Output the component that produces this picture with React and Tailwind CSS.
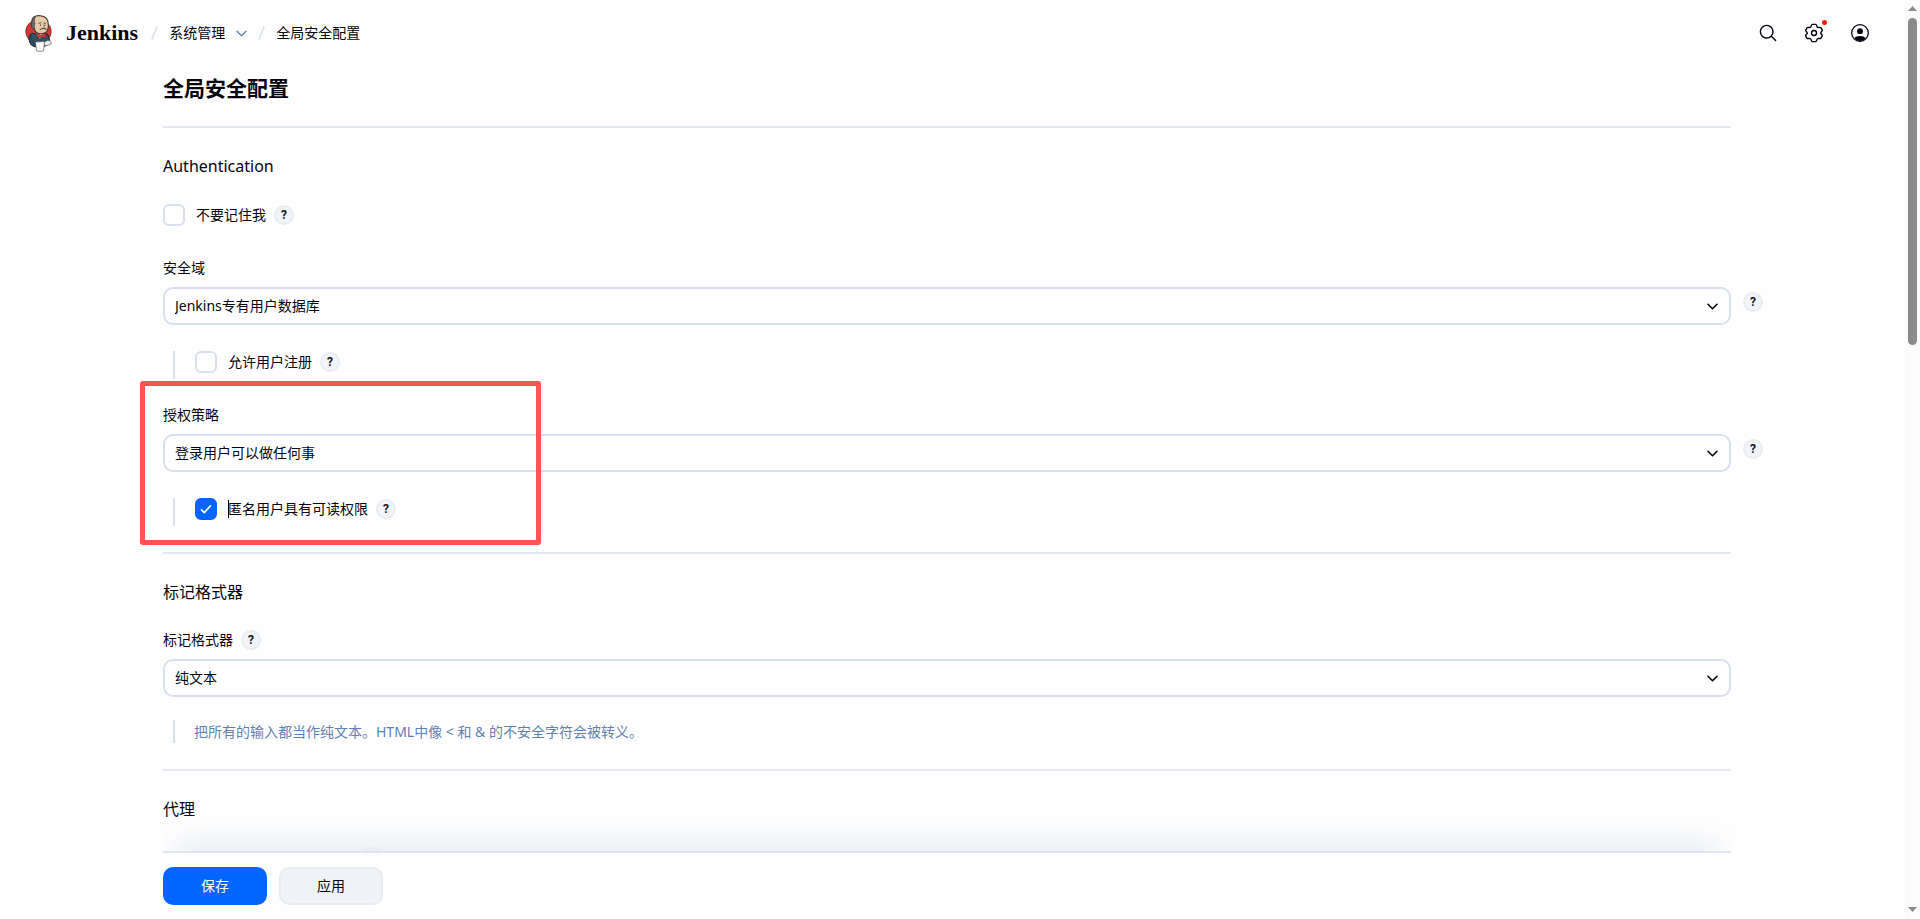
import React, { useState } from "react";

const JenkinsLogo = () => (
  <svg viewBox="77 44 80 110" className="h-[37px] w-[27px]" aria-hidden="true">
    <ellipse cx="117" cy="93" rx="38" ry="35" fill="#d33833" stroke="#5a2422" strokeWidth="2" />
    <path
      d="M98 98 C89 102 87 114 90 122 C93 134 104 140 116 139 C132 140 146 134 150 124 C150 112 148 104 140 99 L124 103 Z"
      fill="#335061"
      stroke="#1c2b36"
      strokeWidth="3"
    />
    <path d="M110 99 L120 114 L134 101 Z" fill="#f4f4f4" />
    <path
      d="M97 64 C98 51 108 45 122 46 C138 47 146 58 146 72 C147 86 141 97 130 99 C118 101 109 97 105 87 C97 84 95 76 97 64 Z"
      fill="#e6cbab"
      stroke="#39352f"
      strokeWidth="3"
    />
    <path
      d="M97 66 C99 54 104 50 108 49 C104 57 104 64 107 70 C104 74 105 80 106 86 C97 84 95 76 97 66 Z"
      fill="#6d6b6d"
      stroke="#39352f"
      strokeWidth="1.5"
    />
    <path d="M117 69 l8 -2 M132 68 l7 1" stroke="#39352f" strokeWidth="2.4" />
    <circle cx="123" cy="74" r="2" fill="#231f20" />
    <circle cx="136" cy="74" r="2" fill="#231f20" />
    <path d="M131 72 l4 9 l-6 1" fill="none" stroke="#8a6a4c" strokeWidth="1.8" />
    <path d="M121 88 C127 83 135 83 141 87" fill="none" stroke="#5a5552" strokeWidth="3" />
    <path
      d="M113 99 L124 104 L138 98 L139 112 L125 109 L114 113 Z"
      fill="#d33833"
      stroke="#7b1b18"
      strokeWidth="1.5"
    />
    <path d="M108 124 L135 123 L132 150 C126 153 116 153 111 150 Z" fill="#fff" stroke="#4d565c" strokeWidth="2" />
    <path d="M134 128 C138 119 148 118 154 123 C157 129 153 134 147 133 L135 136 Z" fill="#f1f1f1" stroke="#4d565c" strokeWidth="2" />
    <path d="M96 106 C94 116 98 126 108 132" fill="none" stroke="#1c2b36" strokeWidth="1.5" />
  </svg>
);

const SearchIcon = () => (
  <svg viewBox="0 0 18 18" className="size-[18px]" fill="none" stroke="currentColor" strokeWidth="1.4" strokeLinecap="round">
    <circle cx="7.7" cy="7.7" r="6.3" />
    <path d="M12.3 12.3 L16.6 16.6" />
  </svg>
);

const GearIcon = () => (
  <svg viewBox="2 2 20 20" className="size-5" fill="none" stroke="currentColor" strokeWidth="1.4" strokeLinejoin="round">
    <path d="M18.7 12 C18.7 13.2 20.5 13.6 20.3 14.8 L19 17.2 C18.2 18.2 16.4 16.9 15.4 17.8 C14.5 18.5 15 20.2 13.7 20.6 L10.3 20.6 C9 20.2 9.5 18.5 8.6 17.8 C7.6 16.9 5.8 18.2 5 17.2 L3.7 14.8 C3.5 13.6 5.3 13.2 5.3 12 C5.3 10.8 3.5 10.4 3.7 9.2 L5 6.8 C5.8 5.8 7.6 7.1 8.6 6.2 C9.5 5.5 9 3.8 10.3 3.4 L13.7 3.4 C15 3.8 14.5 5.5 15.4 6.2 C16.4 7.1 18.2 5.8 19 6.8 L20.3 9.2 C20.5 10.4 18.7 10.8 18.7 12 Z" />
    <circle cx="12" cy="12" r="2.5" />
  </svg>
);

const UserIcon = () => (
  <svg viewBox="0 0 18 18" className="size-[18px]">
    <circle cx="9" cy="9" r="8.3" fill="none" stroke="currentColor" strokeWidth="1.3" />
    <circle cx="9" cy="7.2" r="2.9" fill="currentColor" />
    <path d="M3.4 14.2 C4.6 11.4 13.4 11.4 14.6 14.2 C12 17.8 6 17.8 3.4 14.2 Z" fill="currentColor" />
  </svg>
);

const Chevron = ({ className }) => (
  <svg viewBox="0 0 11 11" className={className} fill="none" stroke="currentColor" strokeLinecap="round" strokeLinejoin="round">
    <path d="M1 3.3 L5.5 7.8 L10 3.3" />
  </svg>
);

const Slash = () => (
  <svg viewBox="0 0 7 14" className="h-[14px] w-[7px] text-[#d5dcec]" aria-hidden="true">
    <path d="M6.2 0.5 L0.8 13.5" stroke="currentColor" strokeWidth="1.5" />
  </svg>
);

const HelpButton = ({ label, children = "?" }) => (
  <button
    type="button"
    aria-label={label}
    className="flex size-5 shrink-0 items-center justify-center rounded-full border-2 border-[#e9edf1] bg-[#f1f4f8] font-[Roboto,sans-serif] text-xs leading-4 font-bold text-[#14141f]"
  >
    {children}
  </button>
);

const Checkbox = ({ id, label, defaultChecked, caret }) => {
  const [checked, setChecked] = useState(!!defaultChecked);
  return (
    <div className="flex h-[22px] items-center gap-2">
      <div className="flex items-center gap-[11px]">
        <span className="grid size-[22px]">
          <input
            id={id}
            type="checkbox"
            checked={checked}
            onChange={(e) => setChecked(e.target.checked)}
            className="col-start-1 row-start-1 size-[22px] appearance-none rounded-md border-2 border-[#d9dfee] bg-white checked:border-[#0066ff] checked:bg-[#0066ff]"
          />
          {checked && (
            <svg
              viewBox="0 0 22 22"
              className="pointer-events-none col-start-1 row-start-1 size-[22px]"
              fill="none"
              stroke="#fff"
              strokeWidth="1.7"
              strokeLinecap="round"
              strokeLinejoin="round"
            >
              <path d="M6.5 11.8 L9.3 14.6 L15.5 7.8" />
            </svg>
          )}
        </span>
        <label htmlFor={id} className="relative">
          {caret && <span className="absolute top-px left-0 h-[18px] w-px bg-black" />}
          {label}
        </label>
      </div>
      <HelpButton label={`${label} 帮助`} />
    </div>
  );
};

const SelectField = ({ id, label, options, labelHelp, sideHelp }) => (
  <div>
    <div className="mb-[9px] flex h-5 items-center gap-2">
      <label htmlFor={id}>{label}</label>
      {labelHelp && <HelpButton label={`${label} 帮助`} />}
    </div>
    <div className={sideHelp ? "-mr-8 flex gap-3" : "flex"}>
      <div className="grid flex-1 items-center">
        <select
          id={id}
          className="col-start-1 row-start-1 h-[38px] w-full appearance-none rounded-[10px] border-2 border-[#d9dfee] bg-white px-[10px]"
        >
          {options.map((o) => (
            <option key={o}>{o}</option>
          ))}
        </select>
        <Chevron className="pointer-events-none col-start-1 row-start-1 mr-[13px] size-[11px] justify-self-end stroke-[1.6]" />
      </div>
      {sideHelp && (
        <div className="pt-[5px]">
          <HelpButton label={`${label} 帮助`} />
        </div>
      )}
    </div>
  </div>
);

const Nested = ({ children }) => (
  <div className="mt-[26px] ml-[10px] h-7 border-l-2 border-[#d9dfee] pl-5">{children}</div>
);

const Section = ({ title, children }) => (
  <section className="border-t-2 border-[#e3e8f3] py-[26px]">
    <h2 className="mb-[26px] text-base leading-6">{title}</h2>
    {children}
  </section>
);

const Header = () => (
  <header className="flex h-[66px] shrink-0 items-center justify-between pr-9 pl-[25px]">
    <nav className="flex items-center">
      <a href="#home" className="flex items-center gap-[14px] font-['Liberation_Serif',serif] text-[22px] leading-7 font-bold">
        <JenkinsLogo />
        Jenkins
      </a>
      <div className="ml-[13px] flex items-center gap-[11px]">
        <Slash />
        <a href="#manage">系统管理</a>
        <button type="button" aria-label="展开" className="text-[#5b84b8]">
          <Chevron className="size-[11px] stroke-[1.3]" />
        </button>
        <Slash />
        <a href="#security">全局安全配置</a>
      </div>
    </nav>
    <div className="flex items-center gap-[27px]">
      <button type="button" aria-label="搜索">
        <SearchIcon />
      </button>
      <button type="button" aria-label="设置" className="relative">
        <GearIcon />
        <span className="absolute -top-[3px] -right-[3px] size-[5px] rounded-full bg-[#ff1a1a]" />
      </button>
      <button type="button" aria-label="用户">
        <UserIcon />
      </button>
    </div>
  </header>
);

const Scrollbar = () => (
  <div className="flex w-[15px] shrink-0 flex-col items-center bg-[#fbfbfb] text-[#8b8b8b]" aria-hidden="true">
    <svg viewBox="0 0 15 18" className="h-[18px] w-[15px]">
      <path d="M3 11 L7.5 6 L12 11 Z" fill="currentColor" />
    </svg>
    <div className="w-[9px] flex-1">
      <div className="h-[37%] rounded-full bg-[#8b8b8b]" />
    </div>
    <svg viewBox="0 0 15 18" className="h-[18px] w-[15px]">
      <path d="M3 6 L7.5 11 L12 6 Z" fill="currentColor" />
    </svg>
  </div>
);

export const App = () => {
  return (
    <div className="flex h-screen bg-[#fefefe] font-['Noto_Sans','Noto_Sans_CJK_SC',sans-serif] text-sm leading-5 text-[#05050f]">
      <div className="flex min-w-0 flex-1 flex-col">
        <Header />

        <main className="min-h-0 flex-1 overflow-hidden pt-[7px] pr-[174px] pl-[163px]">
          <h1 className="mb-[23px] text-[21px] leading-[30px] font-bold">全局安全配置</h1>

          <Section title="Authentication">
            <Checkbox id="remember" label="不要记住我" />

            <div className="mt-8">
              <SelectField id="realm" label="安全域" options={["Jenkins专有用户数据库"]} sideHelp />
              <Nested>
                <Checkbox id="signup" label="允许用户注册" />
              </Nested>
            </div>

            {/* Highlighted block */}
            <div className="relative mt-[26px]">
              <SelectField id="strategy" label="授权策略" options={["登录用户可以做任何事"]} sideHelp />
              <Nested>
                <Checkbox id="anonymous" label="匿名用户具有可读权限" defaultChecked caret />
              </Nested>
              <div className="pointer-events-none absolute -top-6 -bottom-[19px] -left-[23px] w-[401px] rounded-[3px] border-5 border-[#ff5454]" />
            </div>
          </Section>

          <Section title="标记格式器">
            <SelectField id="formatter" label="标记格式器" options={["纯文本"]} labelHelp />
            <p className="mt-[23px] ml-[10px] border-l-2 border-[#d9dfee] pl-[19px] leading-[23px] text-[#5f82b0]">
              把所有的输入都当作纯文本。HTML中像 &lt; 和 &amp; 的不安全字符会被转义。
            </p>
          </Section>

          <Section title="代理">
            <div className="pl-[199px]">
              <HelpButton label="代理 帮助">{null}</HelpButton>
            </div>
          </Section>
        </main>

        {/* Bottom bar */}
        <footer className="relative mr-[174px] ml-[163px] shrink-0 border-t-2 border-[#e0e5f2] py-[14px]">
          <div className="pointer-events-none absolute inset-x-0 -top-12 h-[46px] overflow-hidden">
            <div className="absolute inset-x-6 top-[46px] h-10 shadow-[0_0_30px_10px_#e9ecf3]" />
          </div>
          <div className="flex gap-3">
            <button type="button" className="h-[38px] w-[104px] rounded-[10px] bg-[#0066ff] text-white">
              保存
            </button>
            <button type="button" className="h-[38px] w-[104px] rounded-[10px] border-2 border-[#e8ecf1] bg-[#eff2f6]">
              应用
            </button>
          </div>
        </footer>
      </div>
      <Scrollbar />
    </div>
  );
};

export default App;
